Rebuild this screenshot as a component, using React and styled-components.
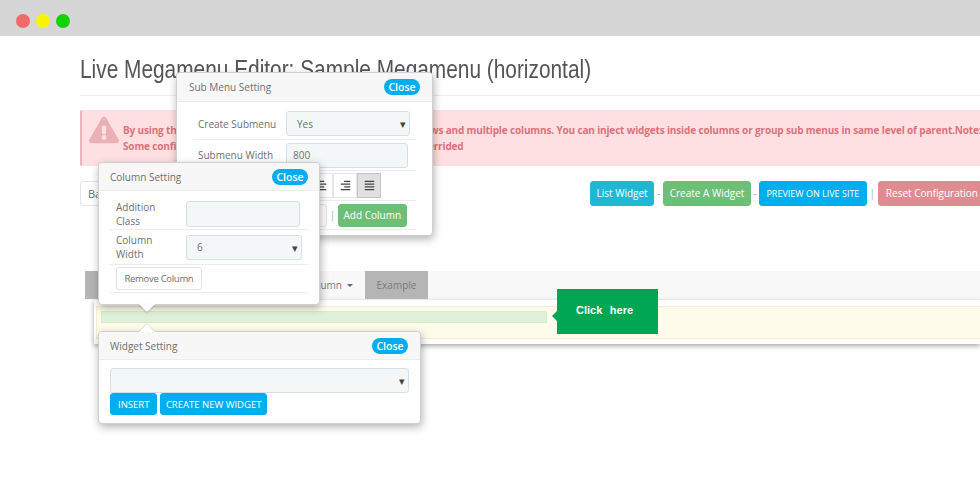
import React from "react";
import styled, { createGlobalStyle } from "styled-components";
import { FaAlignCenter, FaAlignRight, FaAlignJustify, FaExclamationTriangle } from "react-icons/fa";

const GlobalStyle = createGlobalStyle`
  html, body {
    margin: 0;
    background: #fff;
    overflow: hidden;
  }
  * {
    box-sizing: border-box;
  }
`;

const Page = styled.div`
  position: relative;
  width: 980px;
  height: 500px;
  overflow: hidden;
  background: #fff;
  color: #6f6f6f;
  font-family: "Open Sans", "Liberation Sans", sans-serif;
  font-size: 10px;
`;
const BrowserBar = styled.div`
  display: flex;
  align-items: center;
  gap: 6px;
  height: 36px;
  padding: 6px 0 0 16px;
  background: #d6d6d6;
`;
const Dot = styled.span`
  width: 14px;
  height: 14px;
  border-radius: 50%;
  background: ${(p) => p.$color};
`;
const Content = styled.div`
  width: 980px;
  padding-left: 80px;
`;
const Title = styled.h1`
  height: 60px;
  margin: 0;
  padding-top: 17px;
  border-bottom: 1px solid #eeeeee;
  color: #555;
  font-family: "Liberation Sans", sans-serif;
  font-size: 25px;
  font-weight: 400;
  line-height: 32px;
  white-space: nowrap;
`;
const TitleText = styled.span`
  display: inline-block;
  transform: scaleX(0.834);
  transform-origin: left center;
`;
const Alert = styled.div`
  display: flex;
  gap: 4px;
  height: 56px;
  margin-top: 14px;
  padding: 5px 0 0 7px;
  overflow: hidden;
  background: #fee0e2;
  border-left: 2px solid #eeb4b9;
  border-radius: 2px 0 0 2px;
  color: #d9737b;
  font-weight: 700;
  letter-spacing: -0.15px;
  line-height: 16px;
`;
const AlertIcon = styled.div`
  flex: none;
  width: 30px;
  color: #ebb0b6;
  font-size: 30px;
  line-height: 0;
`;
const AlertText = styled.div`
  padding-top: 7px;
  white-space: nowrap;
`;
const Toolbar = styled.div`
  display: flex;
  align-items: center;
  height: 26px;
  margin-top: 14px;
`;
const BackSelect = styled.div`
  flex: none;
  width: 120px;
  height: 25px;
  margin-right: 390px;
  padding: 4px 7px;
  border: 1px solid #e4e4e4;
  border-radius: 3px;
  font-size: 11px;
`;
const Button = styled.button`
  flex: none;
  height: ${(p) => p.$height || 25}px;
  padding: 0 ${(p) => p.$pad || 7}px;
  border: 1px solid ${(p) => p.$color};
  border-radius: 3px;
  background: ${(p) => p.$color};
  color: #fff;
  font-family: inherit;
  font-size: ${(p) => p.$size || 10}px;
  white-space: nowrap;
`;
const Sep = styled.span`
  flex: none;
  width: ${(p) => p.$width}px;
  color: #9db4c0;
  font-size: 10px;
  text-align: center;
`;
const MenuBar = styled.div`
  display: flex;
  height: 29px;
  margin: 65px 0 0 5px;
  background: #f8f8f8;
`;
const Tab = styled.div`
  width: ${(p) => p.$width}px;
  height: 28px;
  padding: 0 ${(p) => (p.$active ? 0 : 12)}px 0 0;
  background: ${(p) => (p.$active ? "#b5b5b5" : "transparent")};
  color: #7c7c7c;
  line-height: 28px;
  text-align: ${(p) => (p.$active ? "center" : "right")};
`;
const Caret = styled.span`
  display: inline-block;
  margin-left: 5px;
  vertical-align: 2px;
  border-top: 3px solid #666;
  border-right: 3px solid transparent;
  border-left: 3px solid transparent;
`;
const Stage = styled.div`
  height: 44px;
  margin-left: 14px;
  padding: 6px 0 5px 2px;
  background: #fff;
  box-shadow: 0 2px 5px rgba(0, 0, 0, 0.35);
`;
const Band = styled.div`
  height: 33px;
  padding: 4px 4px;
  background: #fffbea;
  border-top: 1px solid #f6efcf;
  border-bottom: 1px solid #f6efcf;
  border-left: 1px solid #f6efcf;
`;
const Column = styled.div`
  width: 446px;
  height: 12px;
  background: #dff0d8;
  border: 1px solid #d8ecd0;
`;
const Hint = styled.div`
  position: absolute;
  top: 289px;
  left: 557px;
  width: 101px;
  height: 45px;
  padding: 15px 0 0 19px;
  background: #00a651;
  color: #fff;
  font-family: "Liberation Sans", sans-serif;
  font-size: 11px;
  font-weight: 700;
  word-spacing: 4.5px;
  &::before {
    content: "";
    position: absolute;
    top: 22px;
    left: -5px;
    border-top: 5px solid transparent;
    border-right: 5px solid #00a651;
    border-bottom: 5px solid transparent;
  }
`;
const Popup = styled.div`
  position: absolute;
  top: ${(p) => p.$top}px;
  left: ${(p) => p.$left}px;
  width: ${(p) => p.$width}px;
  height: ${(p) => p.$height}px;
  background: #fff;
  border: 1px solid #cfcfcf;
  border-radius: 4px;
  box-shadow: 1px 3px 8px rgba(0, 0, 0, 0.3);
`;
const PointDown = styled.span`
  position: absolute;
  bottom: -8px;
  left: 40px;
  border-top: 8px solid #fff;
  border-right: 8px solid transparent;
  border-left: 8px solid transparent;
  filter: drop-shadow(0 1px 1px rgba(0, 0, 0, 0.2));
`;
const PointUp = styled.span`
  position: absolute;
  top: -8px;
  left: 40px;
  border-right: 8px solid transparent;
  border-bottom: 8px solid #fff;
  border-left: 8px solid transparent;
  filter: drop-shadow(0 -1px 0 rgba(0, 0, 0, 0.12));
`;
const PopupHead = styled.div`
  display: flex;
  align-items: center;
  justify-content: space-between;
  height: ${(p) => p.$height || 28}px;
  padding: ${(p) => p.$pad};
  background: #f7f7f7;
  border-bottom: 1px solid #ececec;
  border-radius: 4px 4px 0 0;
  font-size: 10px;
`;
const CloseBadge = styled.span`
  width: 36px;
  height: 16px;
  border-radius: 8px;
  background: #00aeef;
  color: #fff;
  font-size: 10.5px;
  font-weight: 600;
  line-height: 16px;
  text-align: center;
`;
const PopupBody = styled.div`
  padding: ${(p) => p.$pad};
`;
const Row = styled.div`
  display: flex;
  align-items: center;
  height: ${(p) => p.$height}px;
  padding-left: ${(p) => p.$indent || 0}px;
  border-bottom: 1px solid #ececec;
`;
const Label = styled.div`
  flex: none;
  width: ${(p) => p.$width}px;
  line-height: 14px;
`;
const Field = styled.div`
  display: flex;
  align-items: center;
  flex: none;
  width: ${(p) => p.$width}px;
  height: ${(p) => p.$height || 25}px;
  padding: 0 3px 0 ${(p) => p.$pad || 10}px;
  background: #f4f7f8;
  border: 1px solid #d5e0e4;
  border-radius: 3px;
  &::after {
    content: ${(p) => (p.$select ? '"▾"' : "none")};
    margin-left: auto;
    color: #444;
    font-size: 11px;
  }
`;
const AlignGroup = styled.div`
  display: flex;
  margin-left: 116px;
`;
const AlignButton = styled.div`
  display: flex;
  align-items: center;
  justify-content: center;
  width: 24px;
  height: 25px;
  background: ${(p) => (p.$active ? "#e0e0e0" : "#fff")};
  border: 1px solid ${(p) => (p.$active ? "#c4c4c4" : "#e6e6e6")};
  color: #444;
  font-size: 11px;
`;
const PlainInput = styled.div`
  flex: none;
  width: 40px;
  height: 23px;
  margin-left: 94px;
  background: #fff;
  border: 1px solid #e4e4e4;
  border-radius: 0 3px 3px 0;
`;
const Outline = styled.button`
  height: 23px;
  padding: 0 7.5px;
  background: #fff;
  border: 1px solid #e2e2e2;
  border-radius: 3px;
  color: #6f6f6f;
  font-family: inherit;
  font-size: 9.5px;
  letter-spacing: -0.3px;
`;
const WidgetActions = styled.div`
  display: flex;
  gap: 3px;
`;

const blue = "#00aeef";

const App = () => {
  return (
    <Page>
      <GlobalStyle />
      <BrowserBar>
        <Dot $color="#ee6b68" />
        <Dot $color="#fbf400" />
        <Dot $color="#10d300" />
      </BrowserBar>
      <Content>
        <Title>
          <TitleText>Live Megamenu Editor: Sample Megamenu (horizontal)</TitleText>
        </Title>
        <Alert>
          <AlertIcon>
            <FaExclamationTriangle />
          </AlertIcon>
          <AlertText>
            By using this tool, you are able to build a menu with as many rows and multiple columns. You can inject widgets inside columns or group sub menus in same level of parent.Note:
            <br />
            Some configurations of sub menus and columns here will be overrided
          </AlertText>
        </Alert>
        <Toolbar>
          <BackSelect>Back</BackSelect>
          <Button $color="#20b7d4" $pad={5.5}>List Widget</Button>
          <Sep $width={9}>-</Sep>
          <Button $color="#6dbf78" $pad={5.5}>Create A Widget</Button>
          <Sep $width={8}>-</Sep>
          <Button $color={blue} $size={9} $pad={6.5}>PREVIEW ON LIVE SITE</Button>
          <Sep $width={11}>|</Sep>
          <Button $color="#e08b90">Reset Configuration</Button>
        </Toolbar>
        <MenuBar>
          <Tab $active $width={150}>Menu</Tab>
          <Tab $width={130}>Column<Caret /></Tab>
          <Tab $active $width={63}>Example</Tab>
        </MenuBar>
        <Stage>
          <Band>
            <Column />
          </Band>
        </Stage>
      </Content>
      <Hint>Click here</Hint>

      <Popup $top={72} $left={176} $width={257} $height={164}>
        <PopupHead $height={29} $pad="0 12px">
          Sub Menu Setting
          <CloseBadge>Close</CloseBadge>
        </PopupHead>
        <PopupBody $pad="6px 16px 0 16px">
          <Row $height={32} $indent={5}>
            <Label $width={88}>Create Submenu</Label>
            <Field $select $width={124}>Yes</Field>
          </Row>
          <Row $height={31} $indent={5}>
            <Label $width={88}>Submenu Width</Label>
            <Field $width={122} $pad={6}>800</Field>
          </Row>
          <Row $height={30}>
            <AlignGroup>
              <AlignButton><FaAlignCenter /></AlignButton>
              <AlignButton><FaAlignRight /></AlignButton>
              <AlignButton $active><FaAlignJustify /></AlignButton>
            </AlignGroup>
          </Row>
          <Row $height={29}>
            <PlainInput />
            <Sep $width={11}>|</Sep>
            <Button $color="#6dbf78" $height={23} $pad={4.5}>Add Column</Button>
          </Row>
        </PopupBody>
      </Popup>

      <Popup $top={162} $left={98} $width={222} $height={143}>
        <PopupHead $pad="0 11px">
          Column Setting
          <CloseBadge>Close</CloseBadge>
        </PopupHead>
        <PopupBody $pad="8px 11px 0 11px">
          <Row $height={31} $indent={6}>
            <Label $width={70}>Addition<br />Class</Label>
            <Field $width={114} $height={26} />
          </Row>
          <Row $height={35} $indent={6}>
            <Label $width={70}>Column<br />Width</Label>
            <Field $select $width={116} $height={25}>6</Field>
          </Row>
          <Row $height={28} $indent={6}>
            <Outline>Remove Column</Outline>
          </Row>
        </PopupBody>
        <PointDown />
      </Popup>

      <Popup $top={331} $left={98} $width={323} $height={93}>
        <PointUp />
        <PopupHead $pad="0 12px 0 11px">
          Widget Setting
          <CloseBadge>Close</CloseBadge>
        </PopupHead>
        <PopupBody $pad="8px 11px 0 11px">
          <Field $select $width={299} $height={25} />
          <WidgetActions>
            <Button $color={blue} $height={22} $size={9.5} $pad={7}>INSERT</Button>
            <Button $color={blue} $height={22} $size={9.5} $pad={4.5}>CREATE NEW WIDGET</Button>
          </WidgetActions>
        </PopupBody>
      </Popup>
    </Page>
  );
};
export default App;
